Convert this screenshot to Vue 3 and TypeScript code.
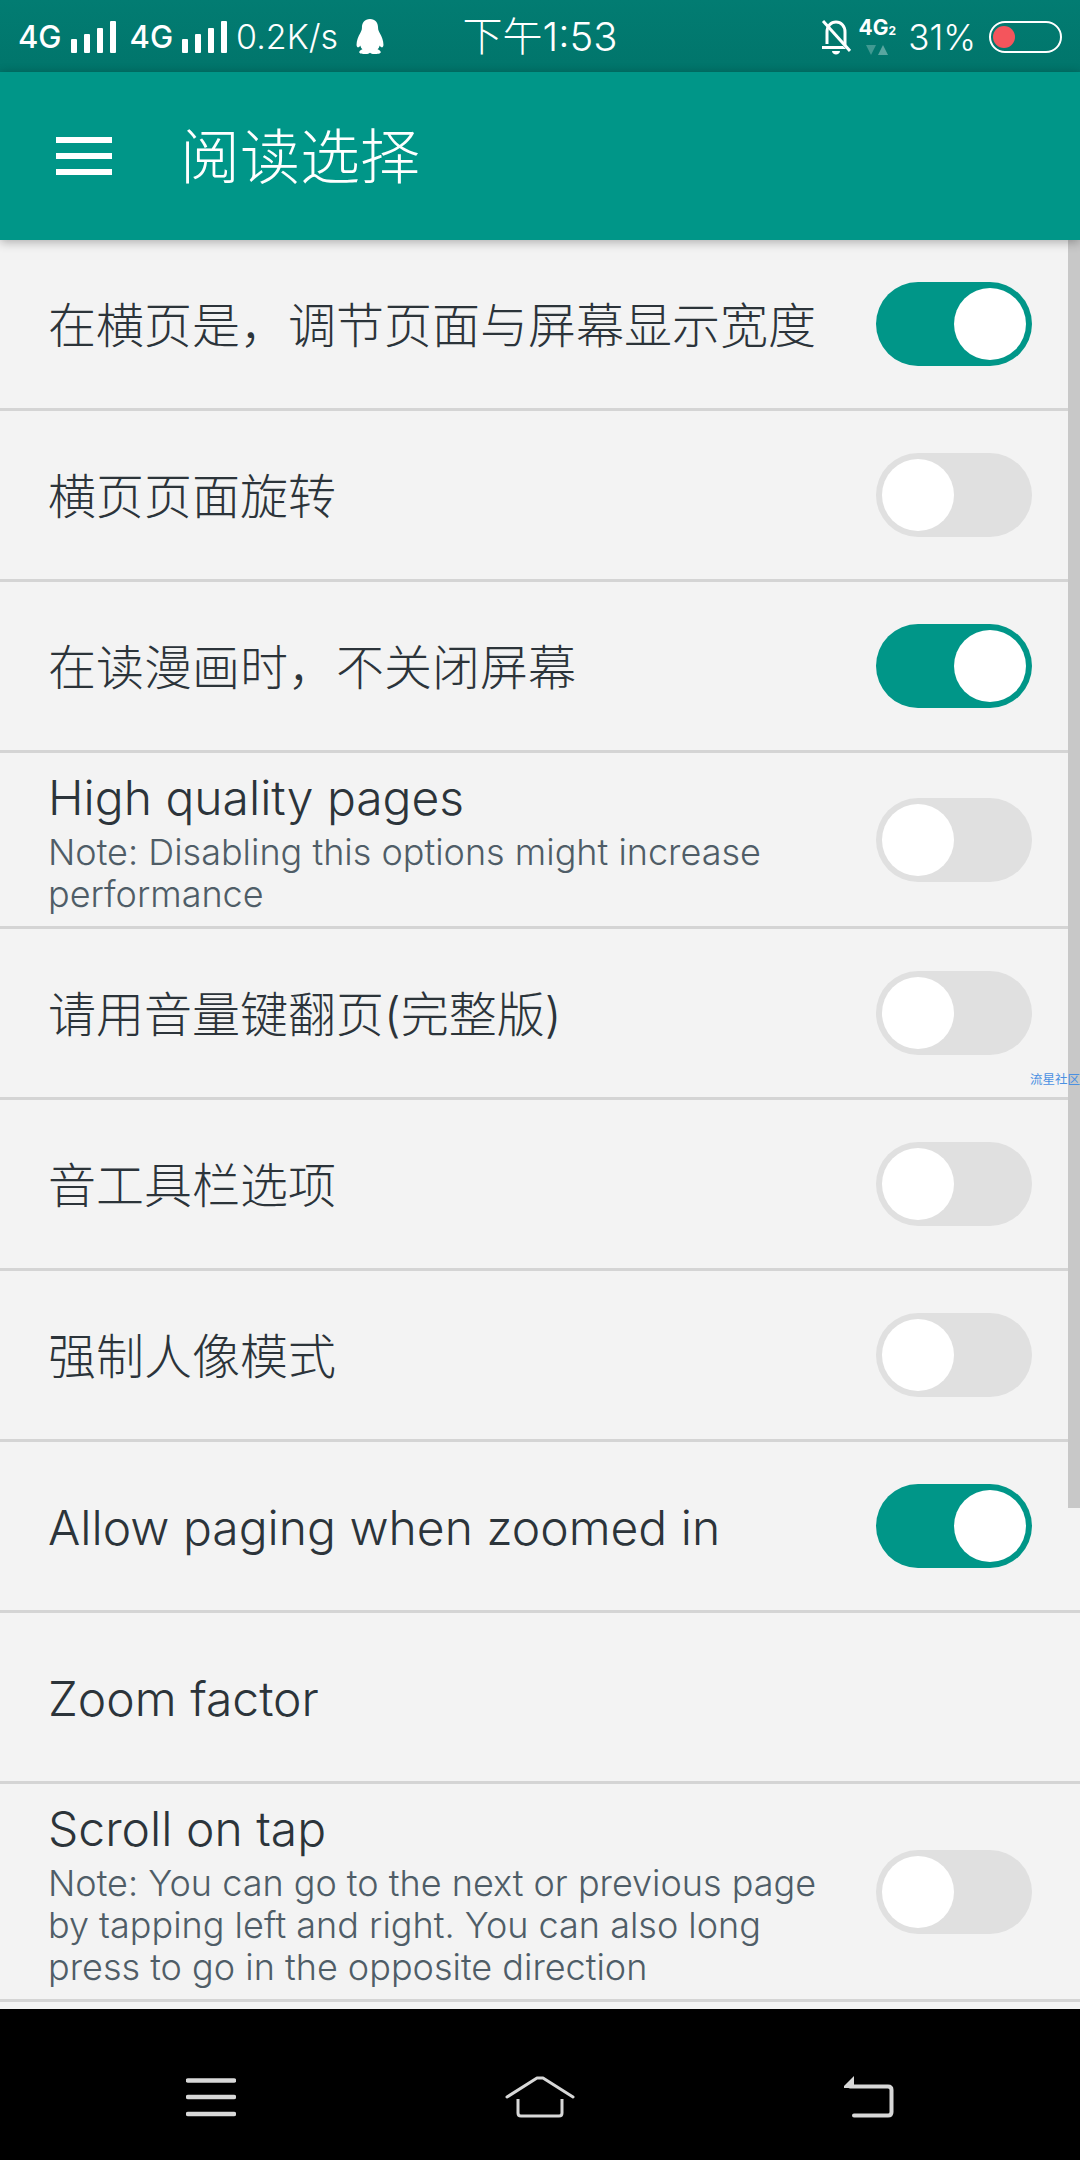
<template>
  <div class="screen">
    <header class="status">
      <div class="status__left">
        <span class="net">4G</span>
        <span class="signal"><i class="b1" /><i class="b2" /><i class="b3" /><i class="b4" /></span>
        <span class="net net--second">4G</span>
        <span class="signal"><i class="b1" /><i class="b2" /><i class="b3" /><i class="b4" /></span>
        <span class="speed">0.2K/s</span>
        <svg class="penguin" viewBox="0 0 26 34" width="28" height="35" preserveAspectRatio="none">
          <path fill="#fff" d="M13 0C8 0 5.500 3.500 5.500 8.500c0 2-.5 3-1.500 5C2 17 .5 21 .5 25c0 1.500.5 2.500 1.500 2.500.8 0 1.500-.8 2-1.800.3 1.500 1 2.800 2 3.800C4.500 30.300 3 31 3 32.200 3 33.500 6 34 9 34c1.800 0 3.200-.5 4-1.300.8.800 2.200 1.300 4 1.300 3 0 6-.5 6-1.800 0-1.200-1.500-1.900-3-2.700 1-1 1.700-2.300 2-3.800.5 1 1.200 1.800 2 1.800 1 0 1.500-1 1.500-2.500 0-4-1.500-8-3.500-11.500-1-2-1.500-3-1.500-5C20.500 3.500 18 0 13 0z" />
        </svg>
      </div>
      <div class="status__time">下午1:53</div>
      <div class="status__right">
        <svg class="bell" viewBox="0 0 30 36" width="30" height="36">
          <path fill="none" stroke="#fff" stroke-width="3" d="M6 25V13C6 7 10 3 15 3s9 4 9 10v13" />
          <path fill="#fff" d="M1 27h21l3 3H1zM11 32h8c0 2-2 3.500-4 3.500s-4-1.500-4-3.500z" />
          <path stroke="#fff" stroke-width="3" d="M2 2l27 30" />
        </svg>
        <div class="net-small">
          <span class="net-small__label">4G<sub>2</sub></span>
          <span class="net-small__arrows"><i class="down" /><i class="up" /></span>
        </div>
        <span class="percent">31%</span>
        <span class="battery"><i /></span>
      </div>
    </header>

    <div class="toolbar">
      <span class="burger"><i /><i /><i /></span>
      <h1 class="toolbar__title">阅读选择</h1>
    </div>

    <main class="list">
      <div v-for="row in rows" :key="row.title" class="row">
        <div class="row__text">
          <div class="row__title">{{ row.title }}</div>
          <div v-if="row.note" class="row__note">{{ row.note }}</div>
        </div>
        <span v-if="row.on !== undefined" class="switch" :class="{ 'switch--on': row.on }"><i /></span>
      </div>
      <div class="scrollbar" />
      <div class="watermark">流星社区</div>
    </main>

    <nav class="nav">
      <svg viewBox="0 0 50 40" width="50" height="40">
        <path stroke="#d8d8d8" stroke-width="4.500" stroke-linecap="round" fill="none" d="M2 3.500h46M2 20h46M2 37h46" />
      </svg>
      <svg viewBox="0 0 70 42" width="70" height="42">
        <path stroke="#d8d8d8" stroke-width="3" stroke-linecap="round" stroke-linejoin="round" fill="none" d="M2 21 32 2h6l30 19" />
        <path stroke="#d8d8d8" stroke-width="3" fill="none" d="M13 23v14q0 3 3 3h38q3 0 3-3V23" />
      </svg>
      <svg viewBox="0 0 50 42" width="50" height="42">
        <path fill="#d8d8d8" d="M0 10 10 0v12H0z" />
        <path stroke="#d8d8d8" stroke-width="4" stroke-linecap="round" fill="none" d="M6 10.500h38q3.500 0 3.500 3.500v22q0 3.500-3.500 3.500H10" />
      </svg>
    </nav>
  </div>
</template>

<script setup lang="ts">
interface Row {
  title: string
  note?: string
  on?: boolean
}

const rows: Row[] = [
  { title: '在横页是，调节页面与屏幕显示宽度', on: true },
  { title: '横页页面旋转', on: false },
  { title: '在读漫画时，不关闭屏幕', on: true },
  { title: 'High quality pages', note: 'Note: Disabling this options might increase performance', on: false },
  { title: '请用音量键翻页(完整版)', on: false },
  { title: '音工具栏选项', on: false },
  { title: '强制人像模式', on: false },
  { title: 'Allow paging when zoomed in', on: true },
  { title: 'Zoom factor' },
  {
    title: 'Scroll on tap',
    note: 'Note: You can go to the next or previous page by tapping left and right. You can also long press to go in the opposite direction',
    on: false,
  },
]
</script>

<style scoped>
.screen {
  width: 1080px;
  height: 2160px;
  display: flex;
  flex-direction: column;
  overflow: hidden;
  background: #f3f3f3;
  font-family: Inter, "Noto Sans CJK SC", sans-serif;
}

.status {
  height: 72px;
  flex-shrink: 0;
  display: grid;
  grid-template-columns: 1fr auto 1fr;
  align-items: center;
  padding: 0 18px;
  background: linear-gradient(#027c72, #01756b);
  color: #fff;
}
.status__left,
.status__right {
  display: flex;
  align-items: center;
}
.status__right {
  justify-content: flex-end;
}
.status__time {
  font-size: 40px;
  font-weight: 300;
  line-height: 72px;
  padding-top: 1px;
}
.net {
  font-size: 31px;
  font-weight: 500;
  margin-right: 9px;
}
.net--second {
  margin-left: 14px;
}
.signal {
  display: flex;
  align-items: flex-end;
  gap: 7px;
  height: 32px;
}
.signal i {
  width: 6px;
  background: #fff;
  border-radius: 1px;
}
.signal .b1 { height: 14px; }
.signal .b2 { height: 19px; }
.signal .b3 { height: 25px; }
.signal .b4 { height: 32px; }
.speed {
  font-size: 34px;
  font-weight: 300;
  margin-left: 9px;
}
.penguin {
  margin-left: 18px;
}
.bell {
  margin-right: 8px;
}
.net-small {
  display: flex;
  flex-direction: column;
  align-items: center;
  margin-right: 13px;
  width: 36px;
}
.net-small__label {
  font-size: 21px;
  font-weight: 700;
  line-height: 20px;
  white-space: nowrap;
}
.net-small__label sub {
  font-size: 12px;
  vertical-align: baseline;
}
.net-small__arrows {
  display: flex;
  gap: 2px;
  margin-top: 4px;
}
.net-small__arrows i {
  width: 0;
  height: 0;
  border-left: 5px solid transparent;
  border-right: 5px solid transparent;
}
.net-small__arrows .down {
  border-top: 10px solid rgba(255, 255, 255, 0.25);
}
.net-small__arrows .up {
  border-bottom: 10px solid rgba(255, 255, 255, 0.35);
}
.percent {
  font-size: 35px;
  font-weight: 300;
  margin-right: 13px;
}
.battery {
  width: 73px;
  height: 32px;
  box-sizing: border-box;
  border: 2px solid #fff;
  border-radius: 16px;
  display: flex;
  align-items: center;
  padding-left: 2px;
}
.battery i {
  width: 22px;
  height: 22px;
  border-radius: 50%;
  background: #f4555c;
}

.toolbar {
  height: 168px;
  flex-shrink: 0;
  position: relative;
  z-index: 1;
  display: flex;
  align-items: center;
  background: #009688;
  box-shadow: 0 2px 10px rgba(0, 0, 0, 0.3);
  color: #fff;
}
.burger {
  width: 56px;
  margin-left: 56px;
  display: flex;
  flex-direction: column;
  gap: 10px;
}
.burger i {
  height: 6px;
  background: #fff;
}
.toolbar__title {
  margin: -8px 0 0 68px;
  font-size: 60px;
  font-weight: 300;
}

.list {
  flex: 1;
  position: relative;
  overflow: hidden;
}
.row {
  min-height: 171px;
  box-sizing: border-box;
  display: flex;
  align-items: center;
  padding: 0 48px;
  border-bottom: 3px solid #d4d4d4;
  color: #2c343a;
}
.row__text {
  flex: 1;
  min-width: 0;
  margin-right: 50px;
  padding: 15px 0 11px;
}
.row__title {
  font-size: 48px;
  font-weight: 300;
  line-height: 60px;
}
.row__note {
  margin-top: 3px;
  font-size: 36px;
  font-weight: 300;
  line-height: 42px;
  color: #4f5d67;
}

.switch {
  width: 156px;
  height: 84px;
  flex-shrink: 0;
  box-sizing: border-box;
  padding: 6px;
  display: flex;
  border-radius: 42px;
  background: #e0e0e0;
}
.switch i {
  width: 72px;
  height: 72px;
  border-radius: 50%;
  background: #fff;
}
.switch--on {
  justify-content: flex-end;
  background: #009688;
}

.scrollbar {
  position: absolute;
  top: 0;
  right: 0;
  width: 12px;
  height: 1268px;
  background: #c8c8c8;
}
.watermark {
  position: absolute;
  top: 832px;
  right: 0;
  font-size: 12.500px;
  line-height: 16px;
  color: #4a90e2;
}

.nav {
  height: 151px;
  flex-shrink: 0;
  display: flex;
  align-items: center;
  justify-content: space-between;
  padding: 24px 186px 0;
  box-sizing: border-box;
  background: #000;
}
</style>
